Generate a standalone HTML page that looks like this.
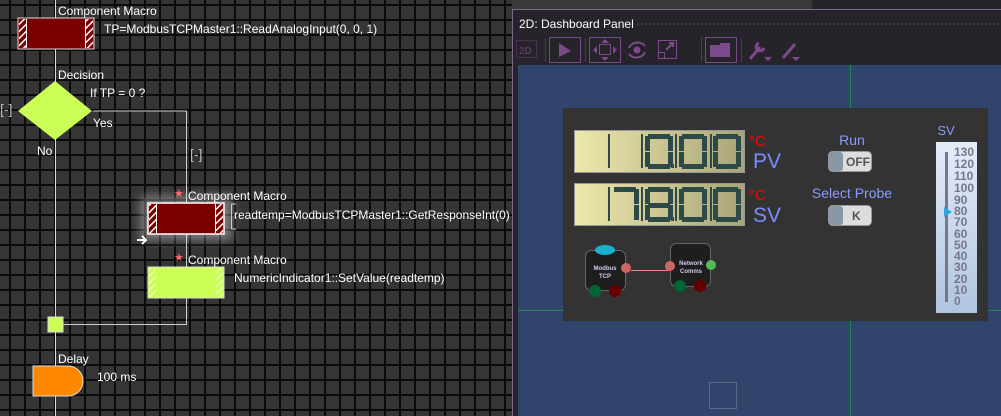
<!DOCTYPE html>
<html><head><meta charset="utf-8"><style>
*{margin:0;padding:0;box-sizing:border-box}
body{width:1001px;height:416px;overflow:hidden;background:#333;position:relative;font-family:"Liberation Sans",sans-serif;}
.grid{position:absolute;left:0;top:0;width:512px;height:416px;background-color:#353535;
background-image:linear-gradient(to right,#0a0a0a 0,#0a0a0a 2px,transparent 2px),linear-gradient(to bottom,#0a0a0a 0,#0a0a0a 2px,transparent 2px);
background-size:15px 15px;background-position:9px 4px;}
.t{position:absolute;color:#fff;font-size:12px;white-space:nowrap;line-height:14px}
.g{color:#bbb;font-size:14px}
</style></head><body>
<div class="grid"></div>
<svg style="position:absolute;left:0;top:0" width="512" height="416">
<defs>
<pattern id="hw" width="5" height="5" patternUnits="userSpaceOnUse" patternTransform="rotate(45)"><rect width="5" height="5" fill="#7a0000"/><rect width="1.5" height="5" fill="#fff"/></pattern>
<pattern id="hg" width="5" height="5" patternUnits="userSpaceOnUse" patternTransform="rotate(45)"><rect width="5" height="5" fill="#ccff55"/><rect width="1.5" height="5" fill="#eaffc0"/></pattern>
<filter id="gl" x="-50%" y="-50%" width="200%" height="200%"><feGaussianBlur stdDeviation="5"/></filter>
</defs>
<line x1="55.5" y1="0" x2="55.5" y2="416" stroke="#ddd"/>
<polyline points="93,111 186.5,111 186.5,324.5 62,324.5" fill="none" stroke="#ccc"/>
<rect x="18" y="18" width="76" height="31" fill="#7a0000" stroke="#ddd"/>
<rect x="19" y="19" width="7" height="29" fill="url(#hw)"/><rect x="86" y="19" width="7" height="29" fill="url(#hw)"/>
<line x1="26.5" y1="19" x2="26.5" y2="48" stroke="#fff"/><line x1="85.5" y1="19" x2="85.5" y2="48" stroke="#fff"/>
<polygon points="55,81 92,111 55,140 18,111" fill="#ccff55"/>
<rect x="140" y="196" width="92" height="44" fill="#fff" opacity="0.35" filter="url(#gl)"/>
<rect x="148" y="203" width="76" height="31" fill="#7a0000" stroke="#fff" stroke-width="1.5"/>
<rect x="149" y="204" width="7" height="29" fill="url(#hw)"/><rect x="216" y="204" width="7" height="29" fill="url(#hw)"/>
<line x1="156.5" y1="204" x2="156.5" y2="233" stroke="#fff"/><line x1="215.5" y1="204" x2="215.5" y2="233" stroke="#fff"/>
<polyline points="236,204 231.5,204 231.5,229 236,229" fill="none" stroke="#ccc"/>
<path d="M137 240 H145 M142 236 L146 240 L142 244" stroke="#fff" stroke-width="2" fill="none"/>
<rect x="148" y="267" width="76" height="31" fill="#ccff55" stroke="#ddd"/>
<rect x="149" y="268" width="7" height="29" fill="url(#hg)"/><rect x="216" y="268" width="7" height="29" fill="url(#hg)"/>
<text x="174" y="197" fill="#f66" font-size="11">★</text><text x="174" y="261" fill="#f66" font-size="11">★</text>
<rect x="48" y="317" width="15" height="15" fill="#ccff55" stroke="#ddd"/>
<path d="M33 366 H68 A15 15 0 0 1 68 396 H33 Z" fill="#ff8800" stroke="#ddd"/>
</svg>
<div class="t" style="left:58px;top:4px">Component Macro</div>
<div class="t" style="left:104px;top:22px">TP=ModbusTCPMaster1::ReadAnalogInput(0, 0, 1)</div>
<div class="t" style="left:58px;top:68px">Decision</div>
<div class="t" style="left:90px;top:86px">If TP = 0 ?</div>
<div class="t" style="left:93px;top:116px">Yes</div>
<div class="t" style="left:37px;top:144px">No</div>
<div class="t g" style="left:0px;top:102px">[-]</div>
<div class="t g" style="left:190px;top:147px">[-]</div>
<div class="t" style="left:188px;top:189px">Component Macro</div>
<div class="t" style="left:234px;top:208px">readtemp=ModbusTCPMaster1::GetResponseInt(0)</div>
<div class="t" style="left:188px;top:253px">Component Macro</div>
<div class="t" style="left:234px;top:271px">NumericIndicator1::SetValue(readtemp)</div>
<div class="t" style="left:58px;top:352px">Delay</div>
<div class="t" style="left:97px;top:370px">100 ms</div>

<div style="position:absolute;left:512px;top:0;width:489px;height:416px;background:#27232a"></div>
<div style="position:absolute;left:512px;top:0;width:300px;height:9px;background:#3a3a3a"></div>
<div style="position:absolute;left:512px;top:9px;width:489px;height:1px;background:#7a6a8a"></div>
<div style="position:absolute;left:512px;top:10px;width:1px;height:406px;background:#7a6a8a"></div>
<div class="t" style="left:519px;top:17px;color:#fff;font-size:12px">2D: Dashboard Panel</div>
<div style="position:absolute;left:636px;top:23px;width:365px;height:2px;background-image:radial-gradient(#5a5560 40%,transparent 45%);background-size:4px 2px"></div>
<svg style="position:absolute;left:512px;top:35px" width="300" height="30" fill="#7a4a8a" stroke="#7a4a8a">
<rect x="4.5" y="5.5" width="20" height="17" fill="none" stroke="#4a3050"/><text x="7" y="19" font-size="10" font-weight="bold" fill="#5a3a60" stroke="none">2D</text>
<line x1="33.5" y1="3" x2="33.5" y2="27" stroke="#444"/>
<rect x="37.5" y="2.5" width="31" height="25" fill="none"/><path d="M47 8 L59 16 L47 22 Z" stroke="none"/>
<line x1="73.5" y1="3" x2="73.5" y2="27" stroke="#444"/>
<rect x="77.5" y="2.5" width="31" height="25" fill="none"/><rect x="87.5" y="9.5" width="11" height="10" fill="none"/><path d="M93 4 L89 8 H97Z M93 26 L89 22 H97Z M81 15 L85 11 V19Z M105 15 L101 11 V19Z" stroke="none"/>
<circle cx="125" cy="15" r="3.5" stroke="none"/><path d="M117 13 A9 8 0 0 1 133 11 M133 17 A9 8 0 0 1 117 19" fill="none" stroke-width="2"/>
<rect x="146.5" y="5.5" width="18" height="18" fill="none"/><rect x="146.5" y="17.5" width="6" height="6" fill="none"/><path d="M154 15 L161 8 M157 8 H161 V12" fill="none" stroke-width="2"/>
<line x1="189.5" y1="3" x2="189.5" y2="27" stroke="#444"/>
<rect x="193.5" y="2.5" width="31" height="25" fill="none"/><path d="M198 10 H208 V8 H218 V22 H198 Z" stroke="none"/>
<line x1="229.5" y1="3" x2="229.5" y2="27" stroke="#444"/>
<path d="M238 24 L248 12 M247 8 A4 4 0 1 0 252 13" fill="none" stroke-width="3"/><path d="M252 22 H260 L256 26 Z" stroke="none"/>
<path d="M271 23 L283 9" fill="none" stroke-width="3"/><path d="M280 22 H288 L284 26 Z" stroke="none"/>
</svg>
<div style="position:absolute;left:518px;top:65px;width:483px;height:351px;background:#30446c"></div>
<div style="position:absolute;left:518px;top:310px;width:483px;height:1px;background:#1a8a4a"></div>
<div style="position:absolute;left:850px;top:65px;width:1px;height:351px;background:#1a8a4a"></div>
<div style="position:absolute;left:709px;top:382px;width:28px;height:27px;border:1px solid #5a6a8a"></div>
<div style="position:absolute;left:563px;top:108px;width:425px;height:213px;background:#333"></div>
<svg style="position:absolute;left:563px;top:108px" width="425" height="213">
<defs><linearGradient id="lcd" x1="0" x2="1"><stop offset="0" stop-color="#eee8ac"/><stop offset="1" stop-color="#a8a478"/></linearGradient>
<linearGradient id="sl" x1="0" x2="0" y1="0" y2="1"><stop offset="0" stop-color="#e4ecf8"/><stop offset="1" stop-color="#b0c4e0"/></linearGradient></defs>
<rect x="11.5" y="22.5" width="170" height="42" fill="url(#lcd)" stroke="#999"/>
<rect x="11.5" y="75.5" width="170" height="42" fill="url(#lcd)" stroke="#999"/>
<g fill="#2e4a48">
<rect x="45" y="26" width="2" height="34"/><rect x="78" y="26" width="2" height="34"/><rect x="112" y="26" width="2" height="34"/><rect x="147" y="26" width="2" height="34"/>
<rect x="45" y="79" width="2" height="34"/><rect x="78" y="79" width="2" height="34"/><rect x="112" y="79" width="2" height="34"/><rect x="147" y="79" width="2" height="34"/>
<g id="z"><rect x="85" y="26" width="22" height="5"/><rect x="105" y="28" width="5" height="15"/><rect x="105" y="44" width="5" height="15"/><rect x="85" y="56" width="22" height="5"/><rect x="82" y="44" width="5" height="15"/><rect x="82" y="28" width="5" height="15"/></g>
<use href="#z" x="34"/><use href="#z" x="68"/>
<rect x="108" y="56" width="3" height="4"/>
<use href="#z" y="53"/><use href="#z" x="34" y="53"/><use href="#z" x="68" y="53"/>
<rect x="85" y="95" width="22" height="5"/><rect x="108" y="109" width="3" height="4"/>
<rect x="51" y="79" width="22" height="5"/><rect x="71" y="81" width="5" height="15"/><rect x="71" y="97" width="5" height="15"/>
</g>
<text x="186" y="38" fill="#f00" font-size="15">°C</text><text x="190" y="60" fill="#7b8cff" font-size="21">PV</text>
<text x="186" y="92" fill="#f00" font-size="15">°C</text><text x="190" y="114" fill="#7b8cff" font-size="21">SV</text>
<text x="289" y="37" text-anchor="middle" fill="#8a9aff" font-size="14">Run</text>
<rect x="265.5" y="43.5" width="43" height="20" rx="4" fill="#ddd" stroke="#999"/><rect x="266" y="44" width="14" height="19" rx="3" fill="#8898a8"/><text x="283" y="58" font-size="12" font-weight="bold" fill="#555">OFF</text>
<text x="289" y="90" text-anchor="middle" fill="#8a9aff" font-size="14">Select Probe</text>
<rect x="265.5" y="97.5" width="43" height="20" rx="4" fill="#ddd" stroke="#999"/><rect x="266" y="98" width="14" height="19" rx="3" fill="#8898a8"/><text x="289" y="112" font-size="12" font-weight="bold" fill="#555">K</text>
<text x="383" y="27" text-anchor="middle" fill="#8a9aff" font-size="13">SV</text>
<rect x="373" y="34" width="41" height="171" fill="url(#sl)"/>
<rect x="382" y="44" width="3" height="150" fill="#778"/>
<g fill="#778" font-size="12" font-weight="bold">
<text x="391" y="48">130</text><text x="391" y="60">120</text><text x="391" y="72">110</text><text x="391" y="84">100</text><text x="391" y="96">90</text><text x="391" y="107">80</text><text x="391" y="118">70</text><text x="391" y="130">60</text><text x="391" y="141">50</text><text x="391" y="152">40</text><text x="391" y="163">30</text><text x="391" y="175">20</text><text x="391" y="186">10</text><text x="391" y="197">0</text>
</g>
<path d="M381 99 L389 104 L381 109Z" fill="#2aa8e0"/>
<rect x="22.5" y="142.5" width="40" height="40" rx="6" fill="#1e1e1e" stroke="#666"/>
<ellipse cx="42" cy="142" rx="10" ry="5" fill="#1ab0d0"/>
<text x="42" y="162" text-anchor="middle" font-size="6" fill="#cce" font-weight="bold">Modbus</text><text x="42" y="170" text-anchor="middle" font-size="6" fill="#cce" font-weight="bold">TCP</text>
<circle cx="63" cy="160" r="5" fill="#c66"/><line x1="68" y1="162.5" x2="106" y2="162.5" stroke="#e88"/>
<circle cx="32" cy="183" r="6" fill="#063"/><circle cx="52" cy="183" r="6" fill="#600"/>
<rect x="107.5" y="135.5" width="40" height="43" rx="6" fill="#1e1e1e" stroke="#666"/>
<text x="128" y="157" text-anchor="middle" font-size="6" fill="#cce" font-weight="bold">Network</text><text x="128" y="165" text-anchor="middle" font-size="6" fill="#cce" font-weight="bold">Comms</text>
<circle cx="107" cy="158" r="5" fill="#c66"/><circle cx="148" cy="157" r="5" fill="#5b5"/>
<circle cx="117" cy="178" r="6" fill="#063"/><circle cx="137" cy="178" r="6" fill="#600"/>
</svg>
</body></html>
